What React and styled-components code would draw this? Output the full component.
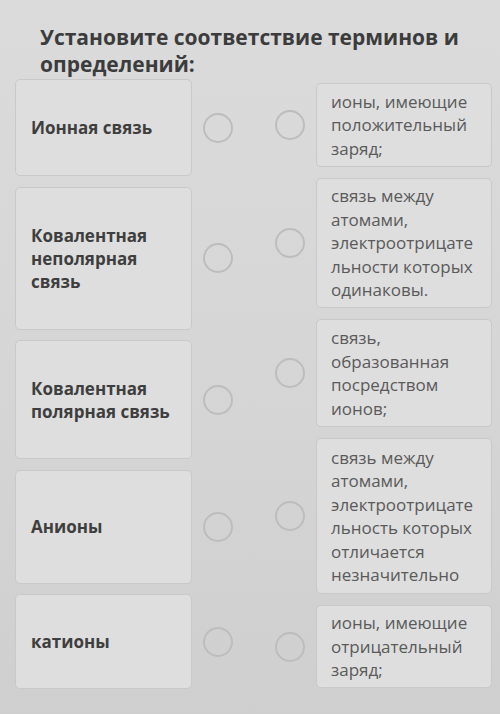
import React from "react";
import styled, { createGlobalStyle } from "styled-components";

const Global = createGlobalStyle`
  html, body { margin: 0; padding: 0; }
  body {
    width: 500px;
    min-height: 714px;
    background: linear-gradient(180deg, #dbdbdb 0%, #d6d6d6 50%, #cfcfcf 100%);
    font-family: "Open Sans", "Noto Sans", sans-serif;
  }
`;

const Page = styled.main`
  width: 500px;
  height: 714px;
  box-sizing: border-box;
  padding: 24px 8px 0 15px;
  overflow: hidden;
`;

const Title = styled.h1`
  margin: 0 0 1px 25px;
  font-size: 21px;
  line-height: 27px;
  font-weight: 700;
  color: #3c3c3c;
`;

const Columns = styled.div`
  display: flex;
  justify-content: space-between;
  align-items: flex-start;
`;

const Column = styled.div`
  display: flex;
  flex-direction: column;
  gap: ${(p) => p.$gap}px;
  margin-top: ${(p) => p.$offset || 0}px;
`;

const Row = styled.div`
  display: flex;
  align-items: center;
  gap: 11px;
`;

const Card = styled.div`
  box-sizing: border-box;
  width: ${(p) => p.$w}px;
  height: ${(p) => p.$h}px;
  display: flex;
  align-items: center;
  background: #dedede;
  border: 1px solid #c9c9c9;
  border-radius: 5px;
`;

const Term = styled.span`
  padding: 0 10px 0 15px;
  font-size: 17px;
  line-height: 23px;
  font-weight: 700;
  color: #3e3e3e;
`;

const Definition = styled.span`
  padding: 0 4px 0 14px;
  font-size: 17px;
  line-height: 23.5px;
  font-weight: 400;
  color: #5a5a5a;
  white-space: nowrap;
`;

const Dot = styled.span`
  box-sizing: border-box;
  flex: none;
  width: 30px;
  height: 30px;
  border-radius: 50%;
  border: 2px solid #bdbdbd;
`;

const terms = [
  { lines: ["Ионная связь"], h: 97 },
  { lines: ["Ковалентная", "неполярная", "связь"], h: 143 },
  { lines: ["Ковалентная", "полярная связь"], h: 119 },
  { lines: ["Анионы"], h: 114 },
  { lines: ["катионы"], h: 95 },
];

const defs = [
  { lines: ["ионы, имеющие", "положительный", "заряд;"], h: 84 },
  { lines: ["связь между", "атомами,", "электроотрицате", "льности которых", "одинаковы."], h: 130 },
  { lines: ["связь,", "образованная", "посредством", "ионов;"], h: 108 },
  { lines: ["связь между", "атомами,", "электроотрицате", "льность которых", "отличается", "незначительно"], h: 156 },
  { lines: ["ионы, имеющие", "отрицательный", "заряд;"], h: 83 },
];

const Lines = ({ lines }) =>
  lines.map((l, j) => (
    <React.Fragment key={j}>
      {j > 0 && <br />}
      {l}
    </React.Fragment>
  ));

export default function App() {
  return (
    <>
      <Global />
      <Page>
        <Title>
          Установите соответствие терминов и
          <br />
          определений:
        </Title>
        <Columns>
          <Column $gap={10.5}>
            {terms.map((t, i) => (
              <Row key={i}>
                <Card $w={177} $h={t.h}>
                  <Term>
                    <Lines lines={t.lines} />
                  </Term>
                </Card>
                <Dot />
              </Row>
            ))}
          </Column>
          <Column $gap={11} $offset={4}>
            {defs.map((d, i) => (
              <Row key={i}>
                <Dot />
                <Card $w={176} $h={d.h}>
                  <Definition>
                    <Lines lines={d.lines} />
                  </Definition>
                </Card>
              </Row>
            ))}
          </Column>
        </Columns>
      </Page>
    </>
  );
}
